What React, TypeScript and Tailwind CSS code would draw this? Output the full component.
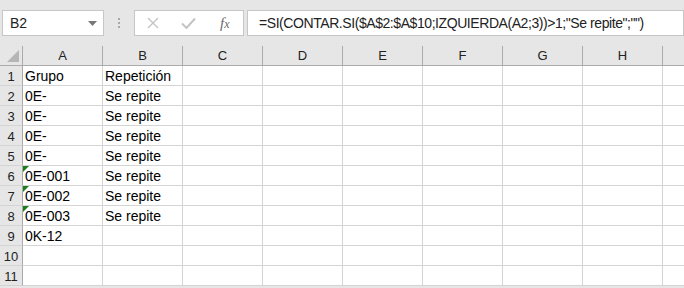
import React from "react";

const cols = ["A", "B", "C", "D", "E", "F", "G", "H", ""];
const data: Record<number, [string, string, boolean]> = {
  1: ["Grupo", "Repetición", false],
  2: ["0E-", "Se repite", false],
  3: ["0E-", "Se repite", false],
  4: ["0E-", "Se repite", false],
  5: ["0E-", "Se repite", false],
  6: ["0E-001", "Se repite", true],
  7: ["0E-002", "Se repite", true],
  8: ["0E-003", "Se repite", true],
  9: ["0K-12", "", false],
  10: ["", "", false],
  11: ["", "", false],
};

const font = { fontFamily: '"Liberation Sans", Arial, sans-serif' };

export default function App() {
  const rows = Array.from({ length: 11 }, (_, i) => i + 1);
  return (
    <div className="w-[684px] h-[288px] overflow-hidden bg-[#e6e6e6] text-[#222]" style={font}>
      {/* toolbar */}
      <div className="h-[46px] flex items-start pt-[10px]">
        <div className="ml-[2px] w-[102px] h-[26px] bg-white border border-[#c6c6c6] flex items-center justify-between pl-[7px] pr-[6px]">
          <span className="text-[14px] leading-none text-[#222]">B2</span>
          <svg width="9" height="5" viewBox="0 0 9 5"><path d="M0 0 H9 L4.5 5 Z" fill="#777" /></svg>
        </div>
        <div className="w-[30px] h-[26px] flex flex-col items-center justify-center gap-[2px]">
          <div className="w-[2px] h-[2px] bg-[#a8a8a8]" />
          <div className="w-[2px] h-[2px] bg-[#a8a8a8]" />
          <div className="w-[2px] h-[2px] bg-[#a8a8a8]" />
        </div>
        <div className="w-[110px] h-[26px] bg-white border border-[#c6c6c6] flex items-center">
          <svg className="ml-[12px]" width="12" height="12" viewBox="0 0 12 12"><path d="M1 1 L11 11 M11 1 L1 11" stroke="#c4c4c4" strokeWidth="1.4" /></svg>
          <svg className="ml-[22px]" width="15" height="12" viewBox="0 0 15 12"><path d="M1 6.5 L5.5 11 L14 1.5" stroke="#c4c4c4" strokeWidth="2" fill="none" /></svg>
          <span className="ml-[24px] text-[15px] italic text-[#6a6a6a] leading-none" style={{ fontFamily: '"Liberation Serif", serif' }}>f<span className="text-[12px]">x</span></span>
        </div>
        <div className="ml-[3px] flex-1 h-[26px] bg-white border border-[#c6c6c6] flex items-center pl-[11px]">
          <span className="text-[14px] leading-none text-[#222] tracking-[-0.43px]">=SI(CONTAR.SI($A$2:$A$10;IZQUIERDA(A2;3))&gt;1;"Se repite";"")</span>
        </div>
      </div>
      {/* header row */}
      <div className="flex h-[20px]">
        <div className="w-[23px] shrink-0 border-r border-b border-[#ababab] relative">
          <svg className="absolute left-[7px] top-[4px]" width="12" height="12" viewBox="0 0 12 12"><path d="M12 0 V12 H0 Z" fill="#b5b5b5" /></svg>
        </div>
        {cols.map((c, i) => (
          <div key={i} className="w-[80px] shrink-0 border-r border-b border-[#ababab] flex items-center justify-center text-[13px] text-[#222]">
            {c}
          </div>
        ))}
      </div>
      {rows.map((r) => {
        const d = data[r];
        return (
          <div key={r} className="flex h-[20px]">
            <div className="w-[23px] shrink-0 border-r border-b border-r-[#ababab] border-b-[#d4d4d4] flex items-end justify-center pb-[2px] text-[13px] leading-none text-[#222]">
              {r}
            </div>
            {cols.map((c, i) => (
              <div key={i} className="w-[80px] shrink-0 bg-white border-r border-b border-[#d4d4d4] flex items-end pl-[2px] pb-[2px] text-[14px] leading-none text-[#000] relative whitespace-nowrap">
                {i === 0 && d[2] && (
                  <svg className="absolute left-0 top-0" width="6" height="6" viewBox="0 0 6 6"><path d="M0 0 H6 L0 6 Z" fill="#1a7f1a" /></svg>
                )}
                {i === 0 ? d[0] : i === 1 ? d[1] : ""}
              </div>
            ))}
          </div>
        );
      })}
    </div>
  );
}
